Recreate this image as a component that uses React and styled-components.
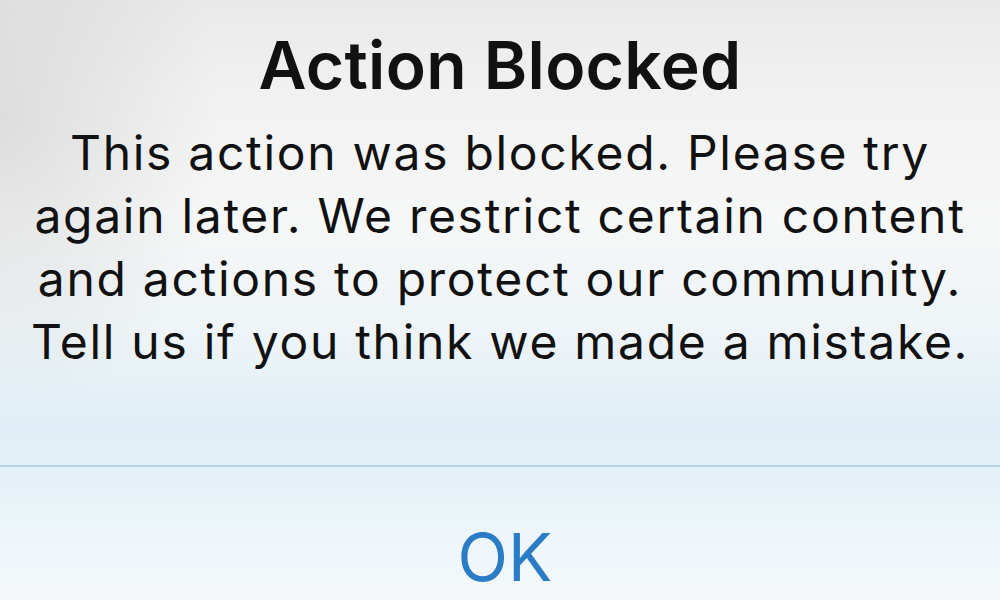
import React from 'react';
import styled, { createGlobalStyle } from 'styled-components';

const GlobalStyle = createGlobalStyle`
    html, body {
        margin: 0;
        padding: 0;
        width: 1000px;
        height: 600px;
        overflow: hidden;
    }
`

const AlertOutDiv = styled.div`
    width: 1000px;
    height: 600px;
    display: flex;
    flex-direction: column;
    font-family: Inter, "Liberation Sans", sans-serif;
    color: #111;
    background:
        radial-gradient(ellipse 220px 300px at 0px 120px, rgba(200, 200, 200, 0.5), rgba(200, 200, 200, 0)),
        linear-gradient(180deg, #e9e9e9 0px, #f1f1f1 90px, #f6f7f7 220px, #eef4f7 330px, #dfeef6 430px, #e4f1f7 470px, #eef6fa 540px, #f4f8fa 600px);
`

const AlertBody = styled.div`
    height: 465px;
    display: flex;
    flex-direction: column;
    align-items: center;
    padding-top: 25px;
    box-sizing: border-box;
`

const AlertTitle = styled.div`
    font-size: 66px;
    font-weight: 600;
    line-height: 80px;
    letter-spacing: 0.3px;
`

const AlertMessage = styled.div`
    margin-top: 16px;
    font-size: 48px;
    line-height: 63px;
    text-align: center;
    letter-spacing: 1.7px;
    white-space: nowrap;
`

const Divider = styled.div`
    height: 2px;
    background: #b4d2e2;
`

const ButtonRow = styled.div`
    flex: 1;
    display: flex;
    justify-content: center;
    align-items: flex-start;
    padding: 50px 0 0 10px;
`

const OkButton = styled.div`
    font-size: 66px;
    line-height: 80px;
    color: #2b7cc6;
    font-weight: 400;
`

function App() {
    return (
        <AlertOutDiv>
            <GlobalStyle />
            <AlertBody>
                <AlertTitle>Action Blocked</AlertTitle>
                <AlertMessage>
                    This action was blocked. Please try<br />
                    again later. We restrict certain content<br />
                    and actions to protect our community.<br />
                    Tell us if you think we made a mistake.
                </AlertMessage>
            </AlertBody>
            <Divider />
            <ButtonRow>
                <OkButton>OK</OkButton>
            </ButtonRow>
        </AlertOutDiv>
    )
}

export default App;
